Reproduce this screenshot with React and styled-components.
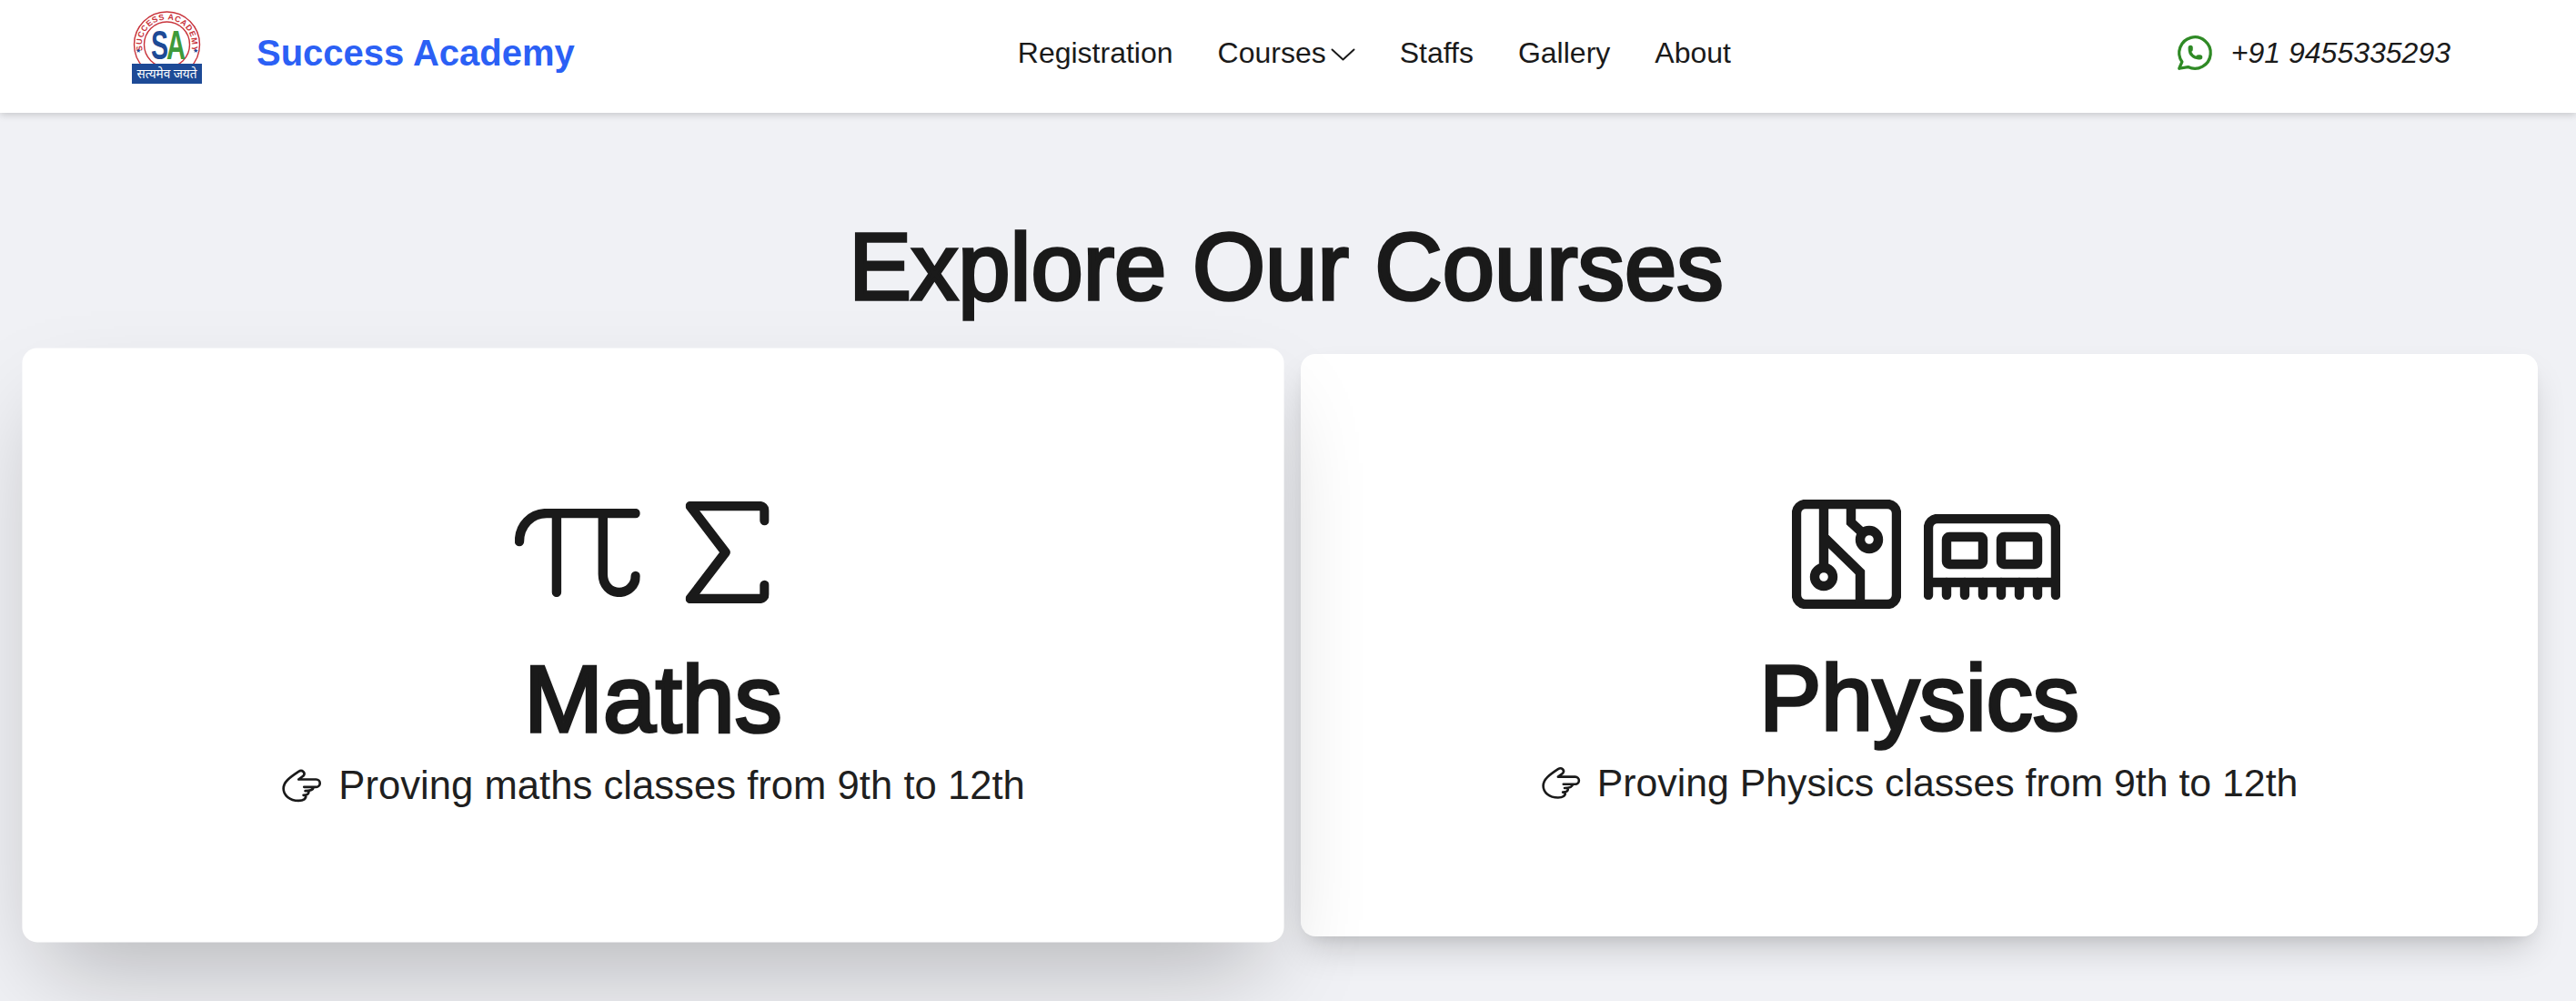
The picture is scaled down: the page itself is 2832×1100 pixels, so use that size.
import React from 'react'
import styled, { createGlobalStyle } from 'styled-components'
import { TbBrandWhatsapp } from 'react-icons/tb'

const GlobalStyle = createGlobalStyle`
  * { box-sizing: border-box; }
  html, body { margin: 0; padding: 0; }
  body {
    background: #f0f1f5;
    color: #1a1a1a;
    font-family: "Liberation Sans", Arial, sans-serif;
    overflow: hidden;
  }
`

const Page = styled.div`
  width: 2832px;
  height: 1100px;
  overflow: hidden;
`

const Nav = styled.nav`
  position: relative;
  z-index: 5;
  height: 124px;
  padding: 0 138px 8px 145px;
  display: flex;
  align-items: center;
  justify-content: space-between;
  background: #fff;
  box-shadow: 0 2px 8px rgba(0, 0, 0, 0.18);
`

const Brand = styled.div`
  display: flex;
  align-items: center;
  gap: 60px;
`

const LogoMark = styled.svg`
  display: block;
  margin-top: -11px;
`

const BrandName = styled.span`
  color: #2b60f5;
  font-size: 40px;
  font-weight: 700;
`

const Menu = styled.ul`
  display: flex;
  align-items: center;
  gap: 49px;
  margin: 0;
  padding: 0;
  list-style: none;
`

const MenuItem = styled.li`
  display: flex;
  align-items: center;
  gap: 5px;
  font-size: 32px;
  color: #1a1a1a;
`

const Phone = styled.div`
  display: flex;
  align-items: center;
  gap: 17px;
  font-size: 32px;
  font-style: italic;
  color: #1a1a1a;
  svg { color: #2f8a25; font-size: 46px; stroke-width: 1.7; }
`

const Main = styled.main`
  padding: 114px 42px 0 38px;
`

const Title = styled.h1`
  margin: 0 0 39px;
  font-size: 103px;
  line-height: 112px;
  font-weight: 400;
  -webkit-text-stroke: 3.5px #1a1a1a;
  text-align: center;
  color: #1a1a1a;
`

const Cards = styled.div`
  display: grid;
  grid-template-columns: 1fr 1fr;
  gap: 32px;
`

const Card = styled.section`
  position: relative;
  z-index: ${p => (p.$active ? 2 : 1)};
  height: 640px;
  padding-top: 160px;
  display: flex;
  flex-direction: column;
  align-items: center;
  background: #fff;
  border-radius: 16px;
  transform: ${p => (p.$active ? 'scale(1.02)' : 'none')};
  box-shadow: ${p =>
    p.$active
      ? '0 50px 100px -24px rgba(0, 0, 0, 0.25)'
      : '0 20px 40px -10px rgba(0, 0, 0, 0.2), 0 8px 16px -8px rgba(0, 0, 0, 0.1)'};
`

const IconRow = styled.div`
  height: 120px;
  margin-left: ${p => p.$shift}px;
  display: flex;
  align-items: center;
  gap: ${p => p.$gap}px;
`

const CardTitle = styled.h2`
  margin: 43px 0 0;
  font-size: 102px;
  line-height: 110px;
  font-weight: 400;
  -webkit-text-stroke: 3.5px #1a1a1a;
  color: #1a1a1a;
`

const CardText = styled.p`
  margin: 10px 0 0;
  display: flex;
  align-items: center;
  gap: 18px;
  font-size: 42.8px;
  line-height: 56px;
  color: #1f1f1f;
`

const Line = styled.svg`
  display: block;
  flex: none;
  fill: none;
  stroke: currentColor;
  stroke-width: ${p => p.$stroke || 10.4};
  stroke-linecap: round;
  stroke-linejoin: round;
  color: #1a1a1a;
`

const Logo = () => (
  <LogoMark width="77" height="81" viewBox="0 0 77 81">
    <defs>
      <path id="logoArc" d="M12.9 47 A27.5 27.5 0 1 1 64.1 47" />
    </defs>
    <circle cx="38.5" cy="37" r="36" fill="#fff" stroke="#c8323a" strokeWidth="1.4" />
    <circle cx="38.5" cy="37" r="25" fill="#fff" stroke="#c8323a" strokeWidth="1.4" />
    <text fontFamily="Liberation Sans" fontSize="9" fontWeight="700" fill="#c8323a" textLength="100">
      <textPath href="#logoArc" startOffset="50%" textAnchor="middle">SUCCESS ACADEMY</textPath>
    </text>
    <text x="7" y="46" fontSize="7" fill="#1d4a96" textAnchor="middle">★</text>
    <text x="70" y="46" fontSize="7" fill="#1d4a96" textAnchor="middle">★</text>
    <text x="21" y="53" fontFamily="Liberation Sans" fontSize="44" fontWeight="700" fill="#1d4a96" textLength="19" lengthAdjust="spacingAndGlyphs">S</text>
    <text x="38" y="53" fontFamily="Liberation Sans" fontSize="44" fontWeight="700" fill="#3e9a3a" textLength="21" lengthAdjust="spacingAndGlyphs">A</text>
    <rect x="0" y="58" width="77" height="22" fill="#1d4a96" />
    <text x="38.5" y="74" fontFamily="Noto Sans, sans-serif" fontSize="14" fill="#fff" textAnchor="middle" textLength="66" lengthAdjust="spacingAndGlyphs">सत्यमेव जयते</text>
  </LogoMark>
)

const Chevron = () => (
  <Line $stroke={2} width="27" height="14" viewBox="0 0 27 14" style={{ marginTop: 4 }}>
    <path d="M1.5 1.5 L13.5 12.5 L25.5 1.5" />
  </Line>
)

const PiIcon = () => (
  <Line width="135" height="95" viewBox="0 0 138 97">
    <path d="M5 36 C5 18 18 5 35 5 H133 M46 5 V92 M97 5 V72 C97 84 105 92 115 92 C125 92 133 84 133 74" />
  </Line>
)

const SigmaIcon = () => (
  <Line width="90" height="110" viewBox="0 0 92 112">
    <path d="M87 21 V10 A5 5 0 0 0 82 5 H5 L44 56 L5 107 H82 A5 5 0 0 0 87 102 V92" />
  </Line>
)

const CircuitIcon = () => (
  <Line width="120" height="120" viewBox="0 0 120 120" style={{ strokeLinecap: 'butt', strokeLinejoin: 'miter' }}>
    <rect x="5" y="5" width="110" height="110" rx="10" />
    <circle cx="35" cy="85" r="10" />
    <circle cx="85" cy="44" r="10" />
    <path d="M35 5 V75 M65 5 V25 L78 37 M35 41 L75 80 V115" />
  </Line>
)

const MemoryIcon = () => (
  <Line width="150" height="94" viewBox="0 0 150 94" style={{ marginTop: 5 }}>
    <path d="M5 75 V15 A10 10 0 0 1 15 5 H135 A10 10 0 0 1 145 15 V75 Z" />
    <rect x="25" y="25" width="40" height="30" rx="3" />
    <rect x="85" y="25" width="40" height="30" rx="3" />
    <path d="M5 75 V89 M25 75 V89 M45 75 V89 M65 75 V89 M85 75 V89 M105 75 V89 M125 75 V89 M145 75 V89" />
  </Line>
)

const HandIcon = () => (
  <Line $stroke={8} width="44" height="38" viewBox="60 62 135 115">
    <path d="M118 100 H176 A12 12 0 0 1 176 125 H136 M168 125 C166 134 158 138 140 138 M152 138 C152 148 148 152 134 152 M142 152 C144 164 134 170 118 170 C88 170 68 152 68 130 C68 108 88 94 118 74 C130 66 142 78 134 88 L118 100" />
  </Line>
)

const courses = [
  {
    name: 'Maths',
    text: 'Proving maths classes from 9th to 12th',
    gap: 49,
    shift: -25,
    active: true,
    icons: [<PiIcon key="pi" />, <SigmaIcon key="sigma" />],
  },
  {
    name: 'Physics',
    text: 'Proving Physics classes from 9th to 12th',
    gap: 25,
    shift: 14,
    icons: [<CircuitIcon key="circuit" />, <MemoryIcon key="memory" />],
  },
]

export default function App() {
  return (
    <Page>
      <GlobalStyle />
      <Nav>
        <Brand>
          <Logo />
          <BrandName>Success Academy</BrandName>
        </Brand>
        <Menu>
          <MenuItem>Registration</MenuItem>
          <MenuItem>Courses<Chevron /></MenuItem>
          <MenuItem>Staffs</MenuItem>
          <MenuItem>Gallery</MenuItem>
          <MenuItem>About</MenuItem>
        </Menu>
        <Phone>
          <TbBrandWhatsapp />
          <span>+91 9455335293</span>
        </Phone>
      </Nav>
      <Main>
        <Title>Explore Our Courses</Title>
        <Cards>
          {courses.map(course => (
            <Card key={course.name} $active={course.active}>
              <IconRow $gap={course.gap} $shift={course.shift}>{course.icons}</IconRow>
              <CardTitle>{course.name}</CardTitle>
              <CardText>
                <HandIcon />
                {course.text}
              </CardText>
            </Card>
          ))}
        </Cards>
      </Main>
    </Page>
  )
}
